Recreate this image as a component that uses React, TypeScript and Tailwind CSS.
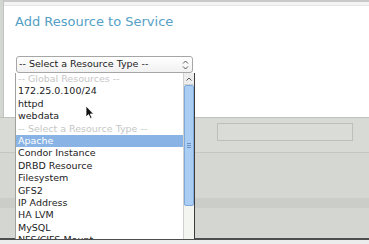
const globalItems = ["172.25.0.100/24", "httpd", "webdata"];
const typeItems = [
  "Apache",
  "Condor Instance",
  "DRBD Resource",
  "Filesystem",
  "GFS2",
  "IP Address",
  "HA LVM",
  "MySQL",
  "NFS/CIFS Mount",
  "NFS Client",
];

const SelectArrows = () => (
  <svg width="7" height="12" viewBox="0 0 7 12" className="shrink-0">
    <path d="M1 4.5 L3.5 2 L6 4.5" fill="none" stroke="#555" strokeWidth="1" />
    <path d="M1 7.5 L3.5 10 L6 7.5" fill="none" stroke="#555" strokeWidth="1" />
  </svg>
);

const Cursor = () => (
  <svg
    width="10"
    height="15"
    viewBox="0 0 10 15"
    className="absolute left-[85px] top-[105px]"
  >
    <path
      d="M1 1 L1 12 L3.6 9.6 L5.4 13.6 L7 12.9 L5.3 9 L8.6 9 Z"
      fill="#111"
      stroke="#fff"
      strokeWidth="0.8"
    />
  </svg>
);

const App = () => {
  return (
    <div className="relative w-[369px] h-[244px] overflow-hidden bg-[#d4d6d1] font-['DejaVu_Sans',sans-serif] flex flex-col">
      {/* dialog */}
      <div className="h-[117px] ml-[3px] border-l border-[#c2c2c2] bg-white flex flex-col">
        <div className="h-[6px] overflow-hidden bg-[#f4f4f4] border-t-[2px] border-b border-t-[#c9c9c9] border-b-[#e6e6e6]">
          <div className="ml-[46px] mt-[-9px] text-[9px] leading-[12px] text-[#333] whitespace-nowrap">
            Non-Critical Resource
          </div>
        </div>
        <div className="mt-[8px] pl-[11px] text-[13px] leading-[16px] text-[#54a0c6] whitespace-nowrap">
          Add Resource to Service
        </div>
        <div className="mt-[26px] ml-[12px] w-[177px] h-[17px] flex items-center justify-between pl-[2px] pr-[3px] border border-[#a6a6a6] rounded-[3px] bg-gradient-to-b from-white to-[#f1f1f1] text-[9.5px] text-[#222] whitespace-nowrap">
          <span>-- Select a Resource Type --</span>
          <SelectArrows />
        </div>
      </div>

      {/* page behind the dialog */}
      <div className="flex-1 flex flex-col border-t border-[#bfc1bc]">
        <div className="h-[34px] bg-[#d8dad5] pt-[5px]">
          <div className="ml-[217px] w-[136px] h-[18px] border border-[#bdbfba] bg-[#dadcd7]" />
        </div>
        <div className="h-[46px] border-t border-[#c5c7c2] bg-[#d5d7d2]" />
        <div className="h-[10px] bg-[#cbcdc8]" />
        <div className="h-[30px] bg-[#d4d6d1]" />
        <div className="h-[2px] bg-[#4d4d4d]" />
        <div className="flex-1 bg-[#ececec]" />
      </div>

      {/* open dropdown list */}
      <div className="absolute left-[15px] top-[73px] w-[180px] h-[166px] flex bg-white border-l border-r border-l-[#a0a0a0] border-r-[#3c3c3c]">
        <div className="flex-1 overflow-hidden text-[9.5px] text-[#222] whitespace-nowrap">
          <div className="h-[12.4px] leading-[12.4px] pl-[2px] text-[#c6c6c6]">
            -- Global Resources --
          </div>
          {globalItems.map((item) => (
            <div key={item} className="h-[12.4px] leading-[12.4px] pl-[2px]">
              {item}
            </div>
          ))}
          <div className="h-[12.4px] leading-[12.4px] pl-[2px] text-[#c6c6c6]">
            -- Select a Resource Type --
          </div>
          {typeItems.map((item) => (
            <div
              key={item}
              className={
                item === "Apache"
                  ? "h-[12.4px] leading-[12.4px] pl-[2px] bg-[#89b3e5] text-white"
                  : "h-[12.4px] leading-[12.4px] pl-[2px]"
              }
            >
              {item}
            </div>
          ))}
        </div>
        <div className="w-[11px] flex flex-col border-l border-[#cfd1cc] bg-[#f3f5f1]">
          <div className="h-[12px] flex items-center justify-center bg-[#ededed] border-b border-[#d0d0d0]">
            <svg width="6" height="4" viewBox="0 0 6 4">
              <path d="M0.5 3.5 L3 1 L5.5 3.5" fill="none" stroke="#555" strokeWidth="1" />
            </svg>
          </div>
          <div className="h-[121px] flex flex-col items-center justify-center gap-[1px] bg-[#a9cdf3] border border-[#80aadb] rounded-[2px]">
            <div className="w-[4px] h-px bg-[#6b93c4]" />
            <div className="w-[4px] h-px bg-[#6b93c4]" />
            <div className="w-[4px] h-px bg-[#6b93c4]" />
          </div>
        </div>
      </div>

      <Cursor />
    </div>
  );
};

export default App;
